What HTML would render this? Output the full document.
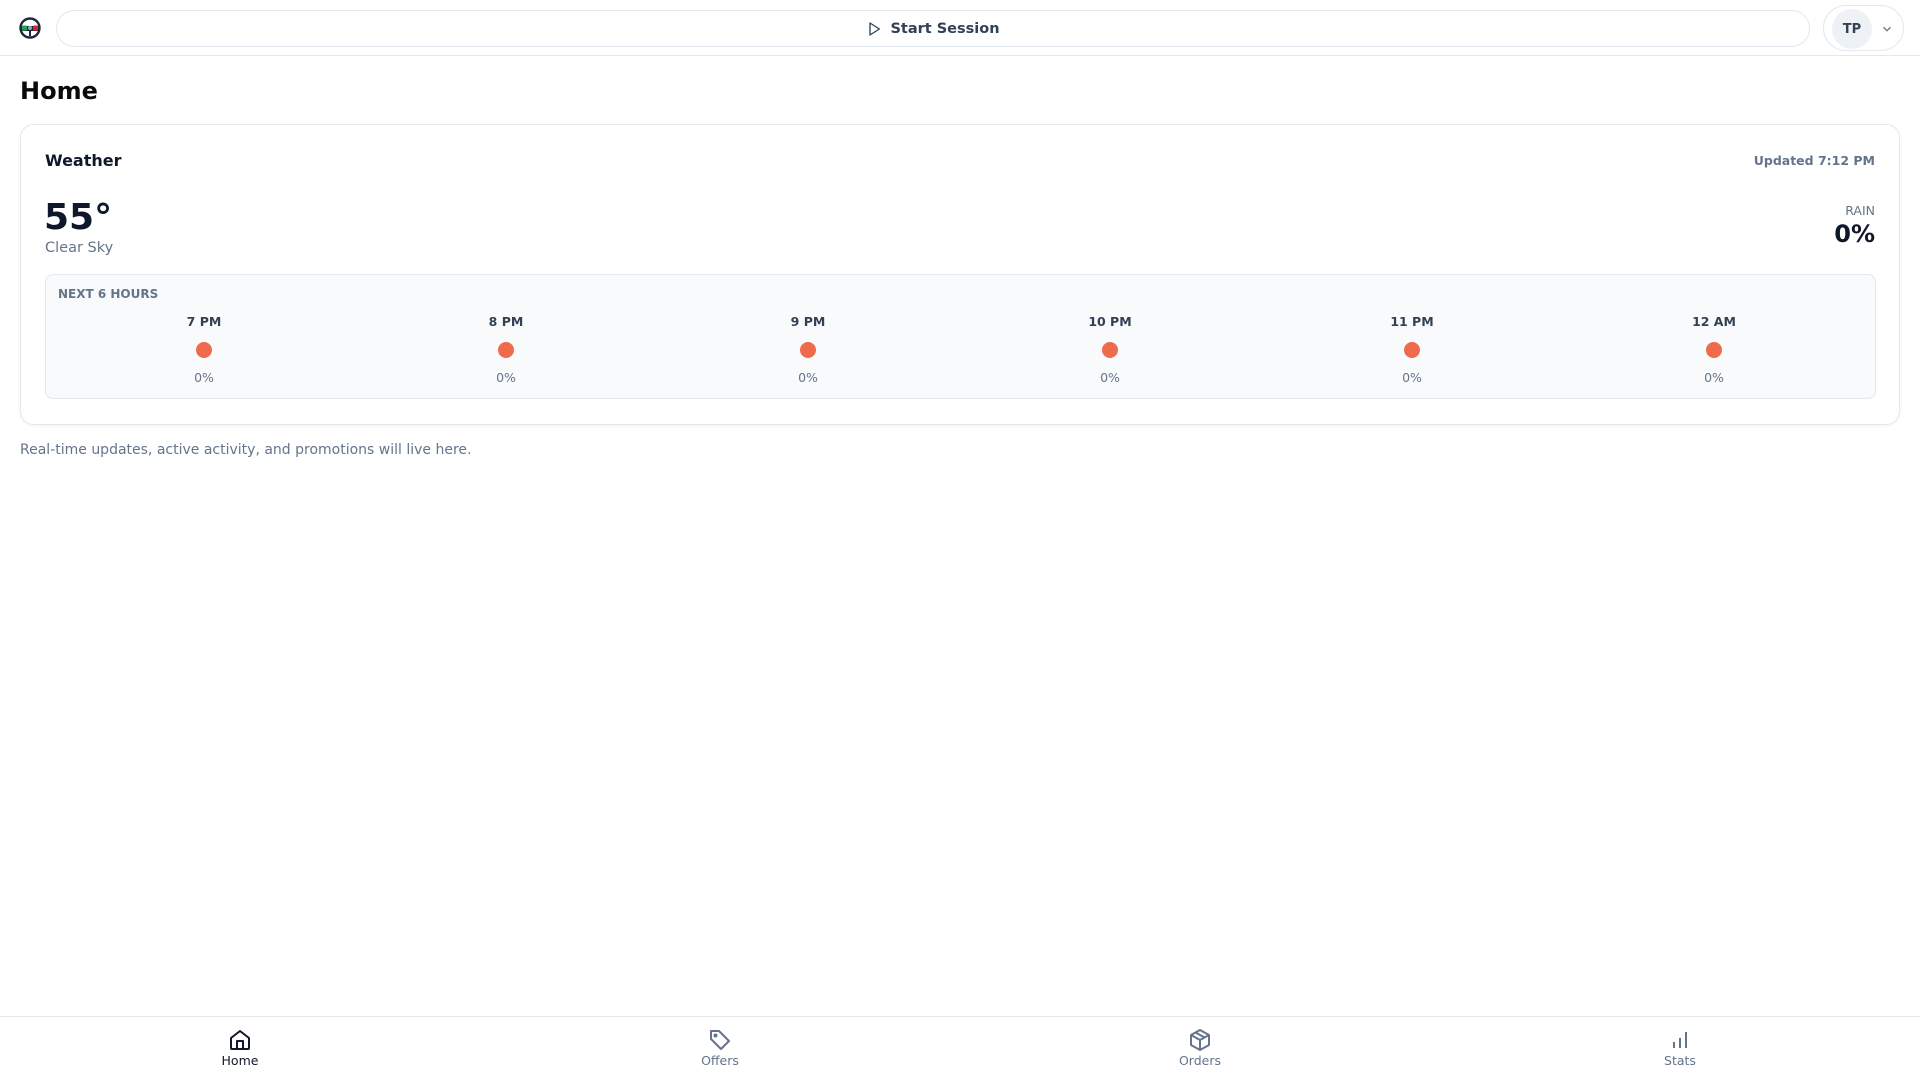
<!DOCTYPE html>
<html><head><meta charset="utf-8"><style>
*{box-sizing:border-box;margin:0;padding:0}
body{width:1920px;height:1080px;background:#fff;font-family:"DejaVu Sans","Liberation Sans",sans-serif;color:#0f172a;position:relative;overflow:hidden}
.hdr{position:absolute;left:0;top:0;width:1920px;height:56px;border-bottom:1px solid #e2e8f0}
.search{position:absolute;left:56px;top:10px;width:1754px;height:37px;border:1px solid #e2e8f0;border-radius:19px;display:flex;align-items:center;justify-content:center;font-size:14.5px;font-weight:bold;color:#334155}
.acct{position:absolute;left:1823px;top:5px;width:81px;height:46px;border:1px solid #e2e8f0;border-radius:23px}
.av{position:absolute;left:8px;top:3px;width:40px;height:40px;border-radius:50%;background:#eef2f7;font-size:13px;font-weight:bold;color:#334155;display:flex;align-items:center;justify-content:center}
h1{position:absolute;left:20px;top:77px;font-size:24px;font-weight:bold;color:#0a0a0a}
.card{position:absolute;left:20px;top:124px;width:1880px;height:301px;border:1px solid #e2e8f0;border-radius:14px;box-shadow:0 1px 3px rgba(0,0,0,.06)}
.abs{position:absolute}
.inner{position:absolute;left:24px;top:149px;width:1831px;height:125px;background:#f8fafc;border:1px solid #e2e8f0;border-radius:8px}
.col{position:absolute;top:39px;width:302px;text-align:center}
.col b{display:block;font-size:12.5px;color:#334155;height:20px}
.dot{width:16px;height:16px;border-radius:50%;background:#ee6c4d;margin:8px auto 9px}
.col span{font-size:12.5px;color:#64748b}
.nav{position:absolute;left:0;top:1016px;width:1920px;height:64px;border-top:1px solid #e2e8f0}
.ni{position:absolute;top:11px;width:120px;text-align:center;font-size:12.5px;color:#64748b}
.ni svg{display:block;margin:0 auto 1px}
</style></head><body>
<div class="hdr">
<svg class="abs" style="left:18px;top:16px" width="24" height="24" viewBox="0 0 24 24"><circle cx="12" cy="12" r="9.5" fill="none" stroke="#1e293b" stroke-width="2.4"/><rect x="3" y="10" width="18" height="5" fill="#1e293b"/><rect x="4" y="9.5" width="5" height="5" rx="1" fill="#22a34a"/><rect x="15" y="9.5" width="5" height="5" rx="1" fill="#dc2626"/><circle cx="12" cy="12" r="2" fill="#94a3b8"/><rect x="11" y="14" width="2" height="6" fill="#1e293b"/></svg>
<div class="search"><svg width="16" height="16" viewBox="0 0 24 24" style="margin-right:8px"><path d="M6 3l14 9-14 9z" fill="none" stroke="#334155" stroke-width="2" stroke-linejoin="round"/></svg>Start Session</div>
<div class="acct"><div class="av">TP</div><svg class="abs" style="left:56px;top:16px" width="14" height="14" viewBox="0 0 24 24"><path d="M6 9l6 6 6-6" fill="none" stroke="#64748b" stroke-width="2.2"/></svg></div>
</div>
<h1>Home</h1>
<div class="card">
<div class="abs" style="left:24px;top:26px;font-size:16px;font-weight:bold">Weather</div>
<div class="abs" style="right:24px;top:28px;font-size:12.5px;font-weight:bold;color:#64748b">Updated 7:12 PM</div>
<div class="abs" style="left:23px;top:75px;font-size:36px;font-weight:bold;line-height:1">55°</div>
<div class="abs" style="left:24px;top:115px;font-size:14.5px;color:#64748b">Clear Sky</div>
<div class="abs" style="right:24px;top:78px;font-size:12.5px;color:#64748b">RAIN</div>
<div class="abs" style="right:24px;top:95px;font-size:24px;font-weight:bold;line-height:1.2">0%</div>
<div class="inner">
<div class="abs" style="left:12px;top:12px;font-size:12px;font-weight:bold;color:#64748b">NEXT 6 HOURS</div>
<div class="col" style="left:7px"><b>7 PM</b><div class="dot"></div><span>0%</span></div>
<div class="col" style="left:309px"><b>8 PM</b><div class="dot"></div><span>0%</span></div>
<div class="col" style="left:611px"><b>9 PM</b><div class="dot"></div><span>0%</span></div>
<div class="col" style="left:913px"><b>10 PM</b><div class="dot"></div><span>0%</span></div>
<div class="col" style="left:1215px"><b>11 PM</b><div class="dot"></div><span>0%</span></div>
<div class="col" style="left:1517px"><b>12 AM</b><div class="dot"></div><span>0%</span></div>
</div>
</div>
<div class="abs" style="left:20px;top:442px;font-size:14px;color:#64748b">Real-time updates, active activity, and promotions will live here.</div>
<div class="nav">
<div class="ni" style="left:180px;color:#0f172a"><svg width="24" height="24" viewBox="0 0 24 24" fill="none" stroke="#0f172a" stroke-width="2" stroke-linejoin="round"><path d="M3 10l9-7 9 7v10a1 1 0 0 1-1 1H4a1 1 0 0 1-1-1z"/><path d="M9 21v-8h6v8"/></svg>Home</div>
<div class="ni" style="left:660px"><svg width="24" height="24" viewBox="0 0 24 24" fill="none" stroke="#64748b" stroke-width="2" stroke-linejoin="round"><path d="M3 3h8l10 10-8 8L3 11z"/><circle cx="7.5" cy="7.5" r="1" fill="#64748b"/></svg>Offers</div>
<div class="ni" style="left:1140px"><svg width="24" height="24" viewBox="0 0 24 24" fill="none" stroke="#64748b" stroke-width="2" stroke-linejoin="round"><path d="M12 2l9 5v10l-9 5-9-5V7z"/><path d="M3 7l9 5 9-5M12 12v10M7.5 4.5l9 5"/></svg>Orders</div>
<div class="ni" style="left:1620px"><svg width="24" height="24" viewBox="0 0 24 24" fill="none" stroke="#64748b" stroke-width="2"><path d="M6 20v-6M12 20V10M18 20V4"/></svg>Stats</div>
</div>
</body></html>
